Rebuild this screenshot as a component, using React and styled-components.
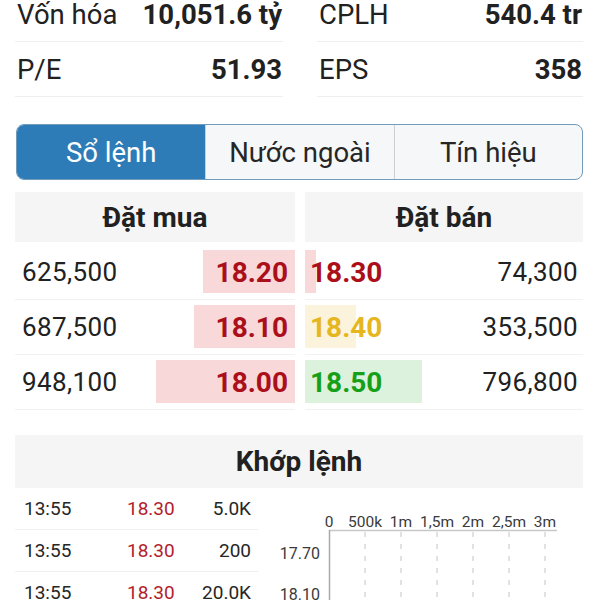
import React from 'react'
import styled, { createGlobalStyle } from 'styled-components'

const GlobalStyle = createGlobalStyle`
    html, body {
        margin: 0;
        padding: 0;
        background: #fff;
        overflow: hidden;
    }
    body {
        font-family: Roboto, "Liberation Sans", sans-serif;
        color: #212121;
    }
`

const stats = [
    [{ label: 'Vốn hóa', value: '10,051.6 tỷ' }, { label: 'CPLH', value: '540.4 tr' }],
    [{ label: 'P/E', value: '51.93' }, { label: 'EPS', value: '358' }],
]

const tabs = ['Sổ lệnh', 'Nước ngoài', 'Tín hiệu']

const buys = [
    { qty: '625,500', price: '18.20', bar: 92 },
    { qty: '687,500', price: '18.10', bar: 101 },
    { qty: '948,100', price: '18.00', bar: 139 },
]

const sells = [
    { qty: '74,300', price: '18.30', bar: 11, tone: 'red' },
    { qty: '353,500', price: '18.40', bar: 51, tone: 'yellow' },
    { qty: '796,800', price: '18.50', bar: 117, tone: 'green' },
]

const trades = [
    { time: '13:55', price: '18.30', vol: '5.0K' },
    { time: '13:55', price: '18.30', vol: '200' },
    { time: '13:55', price: '18.30', vol: '20.0K' },
]

const tones = {
    red: { text: '#ab0f19', bar: '#f9d8da' },
    yellow: { text: '#e6b61f', bar: '#fbf3dc' },
    green: { text: '#16a018', bar: '#ddf2dd' },
}

// truc so luong cua bieu do
const axisTicks = ['0', '500k', '1m', '1,5m', '2m', '2,5m', '3m']

function App() {
    return (
        <>
        <GlobalStyle />
        <Page>
            <StatsGrid>
                {stats.map((row) => row.map((item) => (
                    <StatCell key={item.label}>
                        <span>{item.label}</span>
                        <StatValue>{item.value}</StatValue>
                    </StatCell>
                )))}
            </StatsGrid>

            <TabBar>
                {tabs.map((t, i) => (
                    <Tab key={t} $active={i === 0}>{t}</Tab>
                ))}
            </TabBar>

            <Book>
                <BookSide>
                    <SectionHead>Đặt mua</SectionHead>
                    {buys.map((b) => (
                        <BookRow key={b.price}>
                            <Qty>{b.qty}</Qty>
                            <DepthBar $side="buy" $color={tones.red.bar} style={{ width: b.bar }} />
                            <Price $color={tones.red.text} $side="buy">{b.price}</Price>
                        </BookRow>
                    ))}
                </BookSide>
                <BookSide>
                    <SectionHead>Đặt bán</SectionHead>
                    {sells.map((s) => (
                        <BookRow key={s.price} $side="sell">
                            <DepthBar $side="sell" $color={tones[s.tone].bar} style={{ width: s.bar }} />
                            <Price $color={tones[s.tone].text} $side="sell">{s.price}</Price>
                            <Qty $side="sell">{s.qty}</Qty>
                        </BookRow>
                    ))}
                </BookSide>
            </Book>

            <Matched>
                <SectionHead>Khớp lệnh</SectionHead>
                <MatchedBody>
                    <TradeList>
                        {trades.map((t, i) => (
                            <TradeRow key={i}>
                                <span>{t.time}</span>
                                <TradePrice>{t.price}</TradePrice>
                                <TradeVol>{t.vol}</TradeVol>
                            </TradeRow>
                        ))}
                    </TradeList>
                    <ChartBox>
                        <svg width="325" height="130" viewBox="0 0 325 130">
                            {axisTicks.map((t, i) => {
                                const x = 71 + i * 36
                                return (
                                    <g key={t}>
                                        <text x={x} y={39} textAnchor="middle" fontSize="15.5" fill="#3a3a3a" fontFamily="Roboto, sans-serif">{t}</text>
                                        {i > 0 && <line x1={x} y1={44} x2={x} y2={130} stroke="#c4c4c4" strokeWidth="1" strokeDasharray="5 7" />}
                                    </g>
                                )
                            })}
                            <line x1="71" y1="42.5" x2="299" y2="42.5" stroke="#c8c8c8" strokeWidth="1.5" />
                            <line x1="71.5" y1="42" x2="71.5" y2="130" stroke="#a8a8a8" strokeWidth="1.5" />
                            <text x="62" y="71" textAnchor="end" fontSize="16" fill="#3a3a3a" fontFamily="Roboto, sans-serif">17.70</text>
                            <text x="62" y="112" textAnchor="end" fontSize="16" fill="#3a3a3a" fontFamily="Roboto, sans-serif">18.10</text>
                        </svg>
                    </ChartBox>
                </MatchedBody>
            </Matched>
        </Page>
        </>
    )
}

const Page = styled.div`
    width: 600px;
    height: 600px;
    overflow: hidden;
    box-sizing: border-box;
    padding: 0 17px 0 15px;
`

const StatsGrid = styled.div`
    display: grid;
    grid-template-columns: 268px 1fr;
    column-gap: 34px;
    margin-top: -13px;
`

const StatCell = styled.div`
    height: 54px;
    display: flex;
    align-items: center;
    justify-content: space-between;
    border-bottom: 1px solid #efefef;
    font-size: 27.5px;
    padding: 0 1px 0 2px;
`

const StatValue = styled.span`
    font-weight: 700;
`

const TabBar = styled.div`
    margin: 27px 0 0 1px;
    height: 56px;
    box-sizing: border-box;
    display: grid;
    grid-template-columns: repeat(3, 1fr);
    border: 1.5px solid #6f9cbd;
    border-radius: 8px;
    overflow: hidden;
    background: #f5f7f8;
`

const Tab = styled.div`
    display: flex;
    align-items: center;
    justify-content: center;
    font-size: 27.5px;
    background: ${(p) => (p.$active ? '#2d7cb8' : 'transparent')};
    color: ${(p) => (p.$active ? '#fff' : '#262626')};
    & + & {
        border-left: 1px solid #c9cfd3;
    }
`

const Book = styled.div`
    margin-top: 12px;
    display: grid;
    grid-template-columns: 280px 1fr;
    column-gap: 10px;
`

const BookSide = styled.div`
    display: flex;
    flex-direction: column;
`

const SectionHead = styled.div`
    height: 50px;
    background: #f5f5f5;
    display: flex;
    align-items: center;
    justify-content: center;
    font-size: 28px;
    font-weight: 700;
    margin-bottom: 3px;
`

const BookRow = styled.div`
    position: relative;
    height: 54px;
    border-bottom: 1px solid #f1f1f1;
    display: flex;
    align-items: center;
    justify-content: space-between;
`

const DepthBar = styled.span`
    position: absolute;
    top: 5px;
    bottom: 6px;
    ${(p) => (p.$side === 'buy' ? 'right: 0;' : 'left: 0;')}
    background: ${(p) => p.$color};
`

const Qty = styled.span`
    position: relative;
    font-size: 26px;
    letter-spacing: 0.4px;
    ${(p) => (p.$side === 'sell' ? 'padding-right: 5px;' : 'padding-left: 7px;')}
`

const Price = styled.span`
    position: relative;
    font-size: 28px;
    font-weight: 700;
    color: ${(p) => p.$color};
    ${(p) => (p.$side === 'sell' ? 'padding-left: 5px;' : 'padding-right: 7px;')}
`

const Matched = styled.div`
    margin-top: 25px;
    ${SectionHead} {
        height: 53px;
        margin-bottom: 0;
    }
`

const MatchedBody = styled.div`
    display: flex;
`

const TradeList = styled.div`
    width: 243px;
    flex: none;
`

const TradeRow = styled.div`
    height: 41px;
    border-bottom: 1px solid #f0f0f0;
    display: grid;
    grid-template-columns: 103px 1fr auto;
    align-items: center;
    font-size: 19px;
    padding: 0 7px 0 9px;
    color: #262626;
`

const TradePrice = styled.span`
    color: #b21d2c;
`

const TradeVol = styled.span`
    text-align: right;
`

const ChartBox = styled.div`
    flex: 1;
`

export default App
